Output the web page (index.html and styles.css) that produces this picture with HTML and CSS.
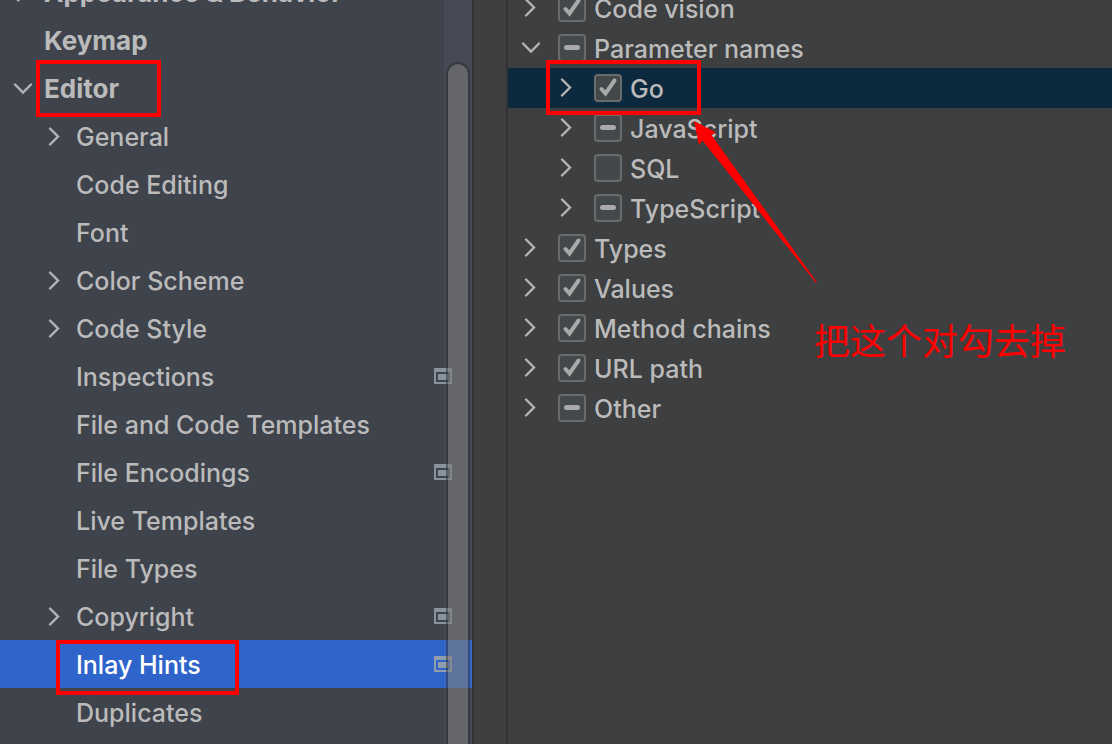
FILE: index.html
```html
<!DOCTYPE html>
<html lang="en">
<head>
<meta charset="utf-8">
<title>Settings</title>
<link rel="stylesheet" href="styles.css">
</head>
<body>
<svg class="symbols" aria-hidden="true">
  <symbol id="right" viewBox="0 0 20 20"><path d="M6 2.5 14 10.5 6 18.5"/></symbol>
  <symbol id="down" viewBox="0 0 20 20"><path d="M3 6.5 11 14.5 19 6.5"/></symbol>
  <symbol id="check" viewBox="0 0 28 28"><path d="M7.5 15 11.5 19.5 20.5 6.5"/></symbol>
  <symbol id="dash" viewBox="0 0 28 28"><path d="M8.500 13.500H19.500"/></symbol>
  <symbol id="project" viewBox="0 0 18 16"><path fill-rule="evenodd" d="M0 0H18V16H0ZM2 4V14H16V4ZM4 6H14V12H4Z"/></symbol>
</svg>
<div class="settings">
  <nav class="sidebar" aria-label="Settings sections">
    <ul class="tree">
      <li class="row top"><button class="toggle" aria-label="Expand Appearance &amp; Behavior"><svg><use href="#right"/></svg></button><a href="#">Appearance &amp; Behavior</a></li>
      <li class="row top"><span class="toggle"></span><a href="#">Keymap</a></li>
      <li class="row top"><button class="toggle" aria-label="Collapse Editor"><svg><use href="#down"/></svg></button><a href="#">Editor</a><span class="mark mark-editor"></span></li>
      <li class="row"><button class="toggle" aria-label="Expand General"><svg><use href="#right"/></svg></button><a href="#">General</a></li>
      <li class="row"><span class="toggle"></span><a href="#">Code Editing</a></li>
      <li class="row"><span class="toggle"></span><a href="#">Font</a></li>
      <li class="row"><button class="toggle" aria-label="Expand Color Scheme"><svg><use href="#right"/></svg></button><a href="#">Color Scheme</a></li>
      <li class="row"><button class="toggle" aria-label="Expand Code Style"><svg><use href="#right"/></svg></button><a href="#">Code Style</a></li>
      <li class="row"><span class="toggle"></span><a href="#">Inspections</a><svg class="project"><use href="#project"/></svg></li>
      <li class="row"><span class="toggle"></span><a href="#">File and Code Templates</a></li>
      <li class="row"><span class="toggle"></span><a href="#">File Encodings</a><svg class="project"><use href="#project"/></svg></li>
      <li class="row"><span class="toggle"></span><a href="#">Live Templates</a></li>
      <li class="row"><span class="toggle"></span><a href="#">File Types</a></li>
      <li class="row"><button class="toggle" aria-label="Expand Copyright"><svg><use href="#right"/></svg></button><a href="#">Copyright</a><svg class="project"><use href="#project"/></svg></li>
      <li class="row selected"><span class="toggle"></span><a href="#" aria-current="page">Inlay Hints</a><svg class="project"><use href="#project"/></svg><span class="mark mark-inlay"></span></li>
      <li class="row"><span class="toggle"></span><a href="#">Duplicates</a></li>
    </ul>
    <div class="track"><div class="thumb"></div></div>
  </nav>
  <main class="content">
    <ul class="hints">
      <li class="hint"><button class="toggle" aria-label="Expand Code vision"><svg><use href="#right"/></svg></button><label><span class="box"><input type="checkbox" checked><svg><use href="#check"/></svg></span><span class="name">Code vision</span></label></li>
      <li class="hint"><button class="toggle" aria-label="Collapse Parameter names"><svg><use href="#down"/></svg></button><label><span class="box"><input type="checkbox"><svg class="mixed"><use href="#dash"/></svg></span><span class="name">Parameter names</span></label></li>
      <li class="hint child current"><button class="toggle" aria-label="Expand Go"><svg><use href="#right"/></svg></button><label><span class="box"><input type="checkbox" checked><svg><use href="#check"/></svg></span><span class="name">Go</span></label><span class="mark mark-go"></span></li>
      <li class="hint child"><button class="toggle" aria-label="Expand JavaScript"><svg><use href="#right"/></svg></button><label><span class="box"><input type="checkbox"><svg class="mixed"><use href="#dash"/></svg></span><span class="name">JavaScript</span></label></li>
      <li class="hint child"><button class="toggle" aria-label="Expand SQL"><svg><use href="#right"/></svg></button><label><span class="box"><input type="checkbox"></span><span class="name">SQL</span></label></li>
      <li class="hint child"><button class="toggle" aria-label="Expand TypeScript"><svg><use href="#right"/></svg></button><label><span class="box"><input type="checkbox"><svg class="mixed"><use href="#dash"/></svg></span><span class="name">TypeScript</span></label></li>
      <li class="hint"><button class="toggle" aria-label="Expand Types"><svg><use href="#right"/></svg></button><label><span class="box"><input type="checkbox" checked><svg><use href="#check"/></svg></span><span class="name">Types</span></label></li>
      <li class="hint"><button class="toggle" aria-label="Expand Values"><svg><use href="#right"/></svg></button><label><span class="box"><input type="checkbox" checked><svg><use href="#check"/></svg></span><span class="name">Values</span></label></li>
      <li class="hint"><button class="toggle" aria-label="Expand Method chains"><svg><use href="#right"/></svg></button><label><span class="box"><input type="checkbox" checked><svg><use href="#check"/></svg></span><span class="name">Method chains</span></label></li>
      <li class="hint"><button class="toggle" aria-label="Expand URL path"><svg><use href="#right"/></svg></button><label><span class="box"><input type="checkbox" checked><svg><use href="#check"/></svg></span><span class="name">URL path</span></label></li>
      <li class="hint"><button class="toggle" aria-label="Expand Other"><svg><use href="#right"/></svg></button><label><span class="box"><input type="checkbox"><svg class="mixed"><use href="#dash"/></svg></span><span class="name">Other</span></label></li>
    </ul>
    <svg class="arrow" viewBox="0 0 124 164" aria-hidden="true"><path d="M0 0 22 11.500 17.500 14 123 161.500 122 162 8.500 19.500 5 24Z"/></svg>
    <p class="note" lang="zh-CN">把这个对勾去掉</p>
  </main>
</div>
</body>
</html>
```

FILE: styles.css
```css
* { box-sizing: border-box; }

body {
  margin: 0;
  background: #3d3f41;
  color: #bbbbbb;
  font: 500 25px/36px Inter, "Noto Sans CJK SC", sans-serif;
}

ul { margin: 0; padding: 0; list-style: none; }

a { color: inherit; text-decoration: none; }

.row a, .name { padding-top: 2px; }

.symbols { position: absolute; width: 0; height: 0; }

.settings {
  display: grid;
  grid-template-columns: 472px 36px minmax(0, 1fr);
  height: 100vh;
  overflow: hidden;
}

.sidebar {
  position: relative;
  overflow: hidden;
  background: #3f434c;
}

/* Both lists are shown part-way through their scroll range. */
.tree { margin-top: -32px; }

.row {
  position: relative;
  display: flex;
  align-items: center;
  height: 48px;
  padding: 0 20px 0 44px;
}

.row.top { padding-left: 12px; font-size: 26px; font-weight: 700; }

.row.selected { background: #2f65ca; color: #ffffff; }

.toggle {
  flex: none;
  display: block;
  width: 20px;
  height: 20px;
  margin: 0 12px 0 0;
  padding: 0;
  border: 0;
  background: none;
}

.toggle svg {
  display: block;
  width: 20px;
  height: 20px;
  fill: none;
  stroke: #b4b4b4;
  stroke-width: 2.4;
  stroke-linecap: round;
}

.project {
  width: 18px;
  height: 16px;
  margin-left: auto;
  fill: #87939a;
}

.selected .project { fill: #919dac; }

.track {
  position: absolute;
  top: 0;
  right: 0;
  bottom: 0;
  width: 28px;
  padding: 62px 2px 0;
  background: rgba(130, 150, 180, 0.09);
}

.thumb {
  height: 100vh;
  border: 2px solid rgba(38, 38, 38, 0.45);
  border-radius: 12px;
  background: rgba(130, 126, 122, 0.54);
  background-clip: padding-box;
}

.content {
  position: relative;
  grid-column: 3;
}

.settings::after {
  content: "";
  grid-column: 2;
  grid-row: 1;
  border: solid #323335;
  border-width: 0 2px;
}

.sidebar, .content { grid-row: 1; }

.hints { margin-top: -12px; }

.hint {
  position: relative;
  display: flex;
  align-items: center;
  height: 40px;
  padding-left: 12px;
}

.hint.child { padding-left: 48px; }
.hint.current { background: #0d293e; }
.hint .toggle { margin: 0 18px 2px 0; }

.hint label { display: flex; align-items: center; gap: 8px; }

.box { display: grid; width: 28px; height: 28px; }

.box > * { grid-area: 1 / 1; }

.box input {
  appearance: none;
  width: 28px;
  height: 28px;
  margin: 0;
  border: 2px solid #6b6b6b;
  border-radius: 4px;
  background: #43494a;
}

.box svg {
  z-index: 1;
  width: 28px;
  height: 28px;
  fill: none;
  stroke: #a9a9a9;
  stroke-width: 4;
  stroke-linecap: round;
  pointer-events: none;
}

.box .mixed { stroke-width: 5; }

/* Red annotations drawn over the lists. */
.mark {
  position: absolute;
  z-index: 2;
  border: 4px solid #ff0000;
  pointer-events: none;
}

.mark-editor { left: 36px; top: -4px; width: 125px; height: 57px; }
.mark-inlay { left: 56px; top: 0; width: 183px; height: 55px; }
.mark-go { left: 38px; top: -8px; width: 155px; height: 55px; }

.arrow {
  position: absolute;
  z-index: 2;
  left: 186px;
  top: 121px;
  width: 124px;
  height: 164px;
  fill: #ff0000;
  pointer-events: none;
}

.note {
  position: absolute;
  left: 306px;
  top: 319px;
  margin: 0;
  color: #ff0000;
  font: 36px/40px "Noto Sans CJK SC", sans-serif;
  white-space: nowrap;
}
```
